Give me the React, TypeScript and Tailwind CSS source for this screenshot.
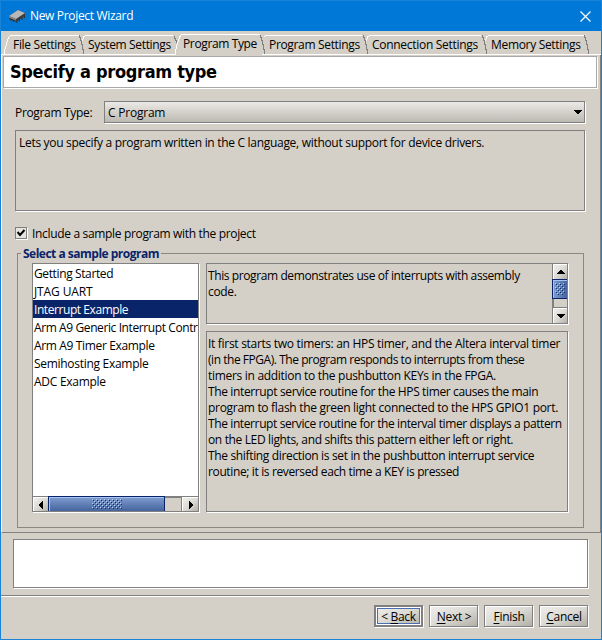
import React from "react";

const box = "border border-[#808080] shadow-[1px_1px_0_#fff]";
const metal = "bg-linear-to-br from-[#f0efec] via-[#dcdad4] to-[#b2afa8]";

const tabs: { label: string; text: string; tab: string; active?: boolean }[] = [
  { label: "File Settings", text: "tracking-[-0.3px]", tab: "w-[75px]" },
  { label: "System Settings", text: "tracking-[-0.35px]", tab: "w-[95px]" },
  { label: "Program Type", text: "tracking-[-0.37px]", tab: "w-[86px]", active: true },
  { label: "Program Settings", text: "tracking-[-0.33px]", tab: "w-[103px]" },
  { label: "Connection Settings", text: "tracking-[-0.29px]", tab: "w-[119px]" },
  { label: "Memory Settings", text: "tracking-[-0.32px]", tab: "w-[104px]" },
];

const samples: [string, string][] = [
  ["Getting Started", "tracking-[-0.38px]"],
  ["JTAG UART", "tracking-[-0.12px]"],
  ["Interrupt Example", "tracking-[-0.43px]"],
  ["Arm A9 Generic Interrupt Contr", "tracking-[-0.4px]"],
  ["Arm A9 Timer Example", "tracking-[-0.35px]"],
  ["Semihosting Example", "tracking-[-0.29px]"],
  ["ADC Example", "tracking-[-0.27px]"],
];

const details: [string, string][] = [
  ["It first starts two timers: an HPS timer, and the Altera interval timer", "tracking-[-0.295px]"],
  ["(in the FPGA). The program responds to interrupts from these", "tracking-[-0.46px]"],
  ["timers in addition to the pushbutton KEYs in the FPGA.", "tracking-[-0.3px]"],
  ["The interrupt service routine for the HPS timer causes the main", "tracking-[-0.37px]"],
  ["program to flash the green light connected to the HPS GPIO1 port.", "tracking-[-0.3px]"],
  ["The interrupt service routine for the interval timer displays a pattern", "tracking-[-0.39px]"],
  ["on the LED lights, and shifts this pattern either left or right.", "tracking-[-0.355px]"],
  ["The shifting direction is set in the pushbutton interrupt service", "tracking-[-0.345px]"],
  ["routine; it is reversed each time a KEY is pressed", "tracking-[-0.37px]"],
];

function TabLines() {
  const edges = [80, 261, 364, 483, 585];
  return (
    <svg className="absolute left-0 top-px" width="602" height="24" fill="none" shapeRendering="crispEdges">
      <path d="M4.500 22.500V18.500L8.500 5.500L10.500 3.500H79M82.500 9L83.500 5L85.500 3.500H173M264 5L266 3.500H362M366.500 9L367.500 5L369.500 3.500H481M485.500 9L486.500 5L488.500 3.500H584M175.500 22.500V18.500L179.500 5L181.500 2.500H260M262 22.500H602M1 22.500H176" stroke="#fff" />
      <path d="M174.500 4V6H175.500V8H176.500V11" stroke="#808080" />
      {edges.map((x) => (
        <path key={x} d={`M${x - 0.5} 3V5H${x + 0.5}V8H${x + 1.5}V12H${x + 2.5}V17H${x + 3.5}V22`} stroke="#808080" />
      ))}
    </svg>
  );
}

function Arrow({ dir }: { dir: "up" | "down" | "left" | "right" }) {
  const d = {
    up: "M3 0h2v1h1v1h1v1h1v1H0V3h1V2h1V1h1z",
    down: "M0 0h8v1H7v1H6v1H5v1H3V3H2V2H1V1H0z",
    left: "M0 3v2h1v1h1v1h1v1h1V0H3v1H2v1H1v1z",
    right: "M4 3v2H3v1H2v1H1v1H0V0h1v1h1v1h1v1z",
  }[dir];
  const side = dir === "left" || dir === "right";
  return (
    <svg width={side ? 4 : 8} height={side ? 8 : 4} shapeRendering="crispEdges">
      <path d={d} fill="#000" />
    </svg>
  );
}

function Grip({ w, h, id }: { w: number; h: number; id: string }) {
  return (
    <svg width={w} height={h} shapeRendering="crispEdges">
      <defs>
        <pattern id={id} width="4" height="4" patternUnits="userSpaceOnUse">
          <path d="M0 0h1v1H0zM2 2h1v1H2z" fill="#b9d0f5" />
          <path d="M1 1h1v1H1zM3 3h1v1H3z" fill="#12306f" />
        </pattern>
      </defs>
      <rect width={w} height={h} fill={`url(#${id})`} />
    </svg>
  );
}

function Btn({ pre, k, post, focus }: { pre?: string; k: string; post: string; focus?: boolean }) {
  return (
    <button className={`w-[49px] h-[22px] p-0 shadow-[1px_1px_0_#fff] ${focus ? "border-2" : "border"} border-[#808080] ${metal}`}>
      <span className={`flex items-center justify-center w-full h-full border-white ${focus ? "border" : "border-l border-t"}`}>
        <span className={`flex items-center justify-center w-full h-full pt-px whitespace-pre tracking-[-0.3px] ${focus ? "border border-[#4a6fb5]" : ""}`}>
          {pre}<span className="underline underline-offset-2">{k}</span>{post}
        </span>
      </span>
    </button>
  );
}

export default function App() {
  return (
    <div className="w-[602px] h-[640px] overflow-hidden flex flex-col bg-[#d4d0c8] border border-t-0 border-[#1883d7] text-black text-[12px] leading-[16px] tracking-[-0.33px] whitespace-nowrap font-['Open_Sans','Noto_Sans',sans-serif]">
      <header className="-mx-px h-[31px] shrink-0 flex items-center bg-[#0078d7] border-t border-[#1883d7] text-white">
        <svg className="ml-[9px]" width="16" height="13" viewBox="0 0 16 13">
          <path d="M0 6L9 0L16 3V6L7 12L0 9Z" fill="#3c3c3c" />
          <path d="M0 6L9 0L16 3L7 9Z" fill="#b8b8b8" />
          <path d="M0 6L7 9V10.500L0 7.500Z" fill="#8a8a8a" />
          <path d="M8 10v3M10.500 8.500v3M13 7v3M15.500 5.500v2.500M2 9v2M4.500 10v2" stroke="#333" />
        </svg>
        <span className="ml-[5px]">New Project Wizard</span>
        <svg className="ml-auto mr-[11px]" width="11" height="11" stroke="#fff" fill="none">
          <path d="M.5 .5L10.500 10.500M10.500 .5L.5 10.500" strokeWidth="1.200" />
        </svg>
      </header>

      <nav className="relative -mx-px h-[24px] shrink-0 flex pl-[13px] pt-[6px]">
        <TabLines />
        {tabs.map((t) => (
          <span key={t.label} className={`relative shrink-0 ${t.tab} ${t.text} ${t.active ? "-top-px" : ""}`}>{t.label}</span>
        ))}
      </nav>

      <main className="h-[478px] shrink-0 border-l border-l-white border-r border-b border-r-[#808080] border-b-[#808080]">
        <div className="ml-px mt-[1px] w-[594px] h-[32px] flex items-center border border-[#a9a9a9] bg-white shadow-[1px_1px_0_#fff]">
          <h1 className="ml-[6px] text-[18px] leading-[22px] font-bold tracking-[-0.32px] font-['DejaVu_Sans_Condensed','DejaVu_Sans',sans-serif]">Specify a program type</h1>
        </div>

        <div className="ml-[13px] mt-[13px] flex items-center h-[22px]">
          <span className="w-[89px] pt-px">Program Type:</span>
          <div className={`w-[481px] h-[22px] flex items-center pl-[3px] pr-[2px] bg-linear-to-b from-[#eceae6] to-[#bcb9b1] ${box}`}>
            <span className="pt-px tracking-[-0.22px]">C Program</span>
            <span className="ml-auto"><Arrow dir="down" /></span>
          </div>
        </div>

        <div className={`ml-[13px] mt-[7px] w-[570px] h-[81px] pl-[3px] pt-[4px] tracking-[-0.3px] ${box}`}>
          Lets you specify a program written in the C language, without support for device drivers.
        </div>

        <label className="ml-[13px] mt-[14px] h-[16px] flex items-center">
          <span className={`w-[12px] h-[12px] flex items-center justify-center bg-[#e6e4df] ${box}`}>
            <svg width="8" height="8" fill="none"><path d="M.5 3L3 6L7.500 1" stroke="#000" strokeWidth="2" /></svg>
          </span>
          <span className="ml-[5px] pt-px">Include a sample program with the project</span>
        </label>

        <fieldset className="relative ml-[15px] mt-[12px] w-[567px] h-[275px] border border-[#8c8880] flex pl-[14px] pt-[9px]">
          <span className="absolute left-[3px] -top-[8px] px-[2px] bg-[#d4d0c8] font-bold text-[#0a246a] tracking-[-0.5px]">Select a sample program</span>
          <div className={`w-[167px] h-[249px] flex flex-col bg-white overflow-hidden ${box}`}>
            <ul className="h-[232px] shrink-0">
              {samples.map(([s, cls], i) => (
                <li key={s} className={`h-[18px] leading-[18px] pl-px pt-px ${cls} ${i === 2 ? "bg-[#0a246a] text-white" : ""}`}>{s}</li>
              ))}
            </ul>
            <div className="h-[15px] flex border-t border-[#808080] bg-[#d4d0c8]">
              <span className={`w-[15px] flex items-center justify-center border-l border-t border-white ${metal}`}><Arrow dir="left" /></span>
              <span className="w-[117px] -mt-px flex items-center justify-center border-x border-t border-[#0a246a] bg-linear-to-b from-[#7f9dd0] to-[#46659f] shadow-[inset_1px_1px_0_#a6c4f2]"><Grip w={30} h={10} id="gh" /></span>
              <span className="w-[17px] border-t border-r border-[#808080]" />
              <span className={`flex-1 flex items-center justify-center border-l border-t border-white ${metal}`}><Arrow dir="right" /></span>
            </div>
          </div>
          <div className="ml-[7px] flex flex-col">
            <div className={`w-[362px] h-[61px] flex ${box}`}>
              <div className="w-[345px] pl-px pt-[4px]">
                <p className="tracking-[-0.4px]">This program demonstrates use of interrupts with assembly</p>
                <p>code.</p>
              </div>
              <div className="w-[15px] flex flex-col border-l border-[#808080]">
                <span className={`h-[15px] flex items-center justify-center border-l border-t border-white ${metal}`}><Arrow dir="up" /></span>
                <span className="h-[20px] -ml-px flex items-center justify-center border-y border-l border-[#0a246a] bg-linear-to-r from-[#7f9dd0] to-[#46659f] shadow-[inset_1px_1px_0_#a6c4f2]"><Grip w={10} h={12} id="gv" /></span>
                <span className="h-[9px] border-l border-b border-[#808080]" />
                <span className={`h-[15px] flex items-center justify-center border-l border-t border-white ${metal}`}><Arrow dir="down" /></span>
              </div>
            </div>
            <div className={`mt-[7px] w-[362px] h-[181px] pl-px pt-[4px] ${box}`}>
              {details.map(([s, cls]) => (<p key={s} className={cls}>{s}</p>))}
            </div>
          </div>
        </fieldset>
      </main>

      <div className={`ml-[12px] mt-[6px] w-[575px] h-[49px] shrink-0 bg-white ${box}`} />
      <div className="mt-[7px] w-[588px] h-[2px] shrink-0 bg-[#808080] border-b border-white" />
      <footer className="ml-[373px] mt-[8px] flex gap-[6px]">
        <Btn pre="< " k="B" post="ack" focus />
        <Btn k="N" post="ext >" />
        <Btn k="F" post="inish" />
        <Btn k="C" post="ancel" />
      </footer>
    </div>
  );
}
